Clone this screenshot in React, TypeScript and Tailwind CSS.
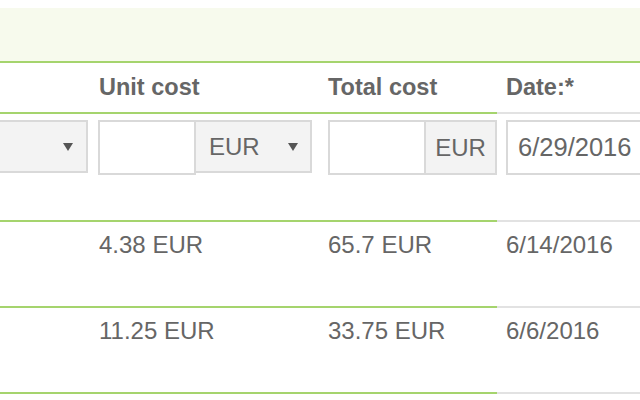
import React from "react";

const green = "border-[#a5d46d]";
const gray = "border-[#e2e2e2]";

function Caret() {
  return (
    <svg width="10" height="8" viewBox="0 0 10 8" className="shrink-0">
      <path d="M0 0 L10 0 L5 8 Z" fill="#555" />
    </svg>
  );
}

type Row = { unit: string; total: string; date: string };

const rows: Row[] = [
  { unit: "4.38 EUR", total: "65.7 EUR", date: "6/14/2016" },
  { unit: "11.25 EUR", total: "33.75 EUR", date: "6/6/2016" },
];

export default function App() {
  return (
    <div className="w-[640px] h-[400px] overflow-hidden bg-white text-[#666] font-['Liberation_Sans',Arial,sans-serif]">
      <div className="h-[8px]" />
      {/* green banner */}
      <div className={`h-[55px] bg-[#f7faed] border-b-2 ${green}`} />

      <div className="grid grid-cols-[90px_229px_178px_1fr]">
        {/* header */}
        <div className={`h-[51px] border-b-2 ${green}`} />
        <div className={`h-[51px] border-b-2 ${green} pl-[9px] flex items-center text-[23.5px] font-bold`}>
          Unit cost
        </div>
        <div className={`h-[51px] border-b-2 ${green} pl-[9px] flex items-center text-[23.5px] font-bold`}>
          Total cost
        </div>
        <div className={`h-[51px] border-b-2 ${gray} pl-[9px] flex items-center text-[23.5px] font-bold whitespace-nowrap`}>
          Date:*
        </div>

        {/* input row */}
        <div className={`h-[108px] border-b-2 ${green} pt-[6px]`}>
          <div className="h-[53px] w-[88px] bg-[#f3f3f3] border-2 border-l-0 border-[#d9d9d9] flex items-center justify-end pr-[13px]">
            <Caret />
          </div>
        </div>
        <div className={`h-[108px] border-b-2 ${green} pt-[6px] pl-[8px] flex items-start`}>
          <div className="h-[55px] w-[98px] bg-white border-2 border-[#d9d9d9]" />
          <div className="h-[53px] w-[118px] -ml-[2px] bg-[#f3f3f3] border-2 border-[#d9d9d9] flex items-center justify-between pl-[13px] pr-[12px] text-[24px]">
            <span>EUR</span>
            <Caret />
          </div>
        </div>
        <div className={`h-[108px] border-b-2 ${green} pt-[6px] pl-[9px] flex items-start`}>
          <div className="h-[55px] w-[98px] bg-white border-2 border-[#d9d9d9]" />
          <div className="h-[55px] w-[73px] -ml-[2px] bg-[#f3f3f3] border-2 border-[#d9d9d9] flex items-center justify-center text-[24px]">
            EUR
          </div>
        </div>
        <div className={`h-[108px] border-b-2 ${gray} pt-[6px] pl-[9px]`}>
          <div className="h-[55px] w-[200px] bg-white border-2 border-[#d9d9d9] flex items-center pl-[10px] text-[25.5px] whitespace-nowrap">
            6/29/2016
          </div>
        </div>

        {/* data rows */}
        {rows.map((r, i) => (
          <React.Fragment key={i}>
            <div className={`h-[86px] border-b-2 ${green}`} />
            <div className={`h-[86px] border-b-2 ${green} pl-[9px] pt-[9px] text-[24px] leading-[28px]`}>{r.unit}</div>
            <div className={`h-[86px] border-b-2 ${green} pl-[9px] pt-[9px] text-[24px] leading-[28px]`}>{r.total}</div>
            <div className={`h-[86px] border-b-2 ${gray} pl-[9px] pt-[9px] text-[24px] leading-[28px] whitespace-nowrap`}>{r.date}</div>
          </React.Fragment>
        ))}
      </div>
    </div>
  );
}
